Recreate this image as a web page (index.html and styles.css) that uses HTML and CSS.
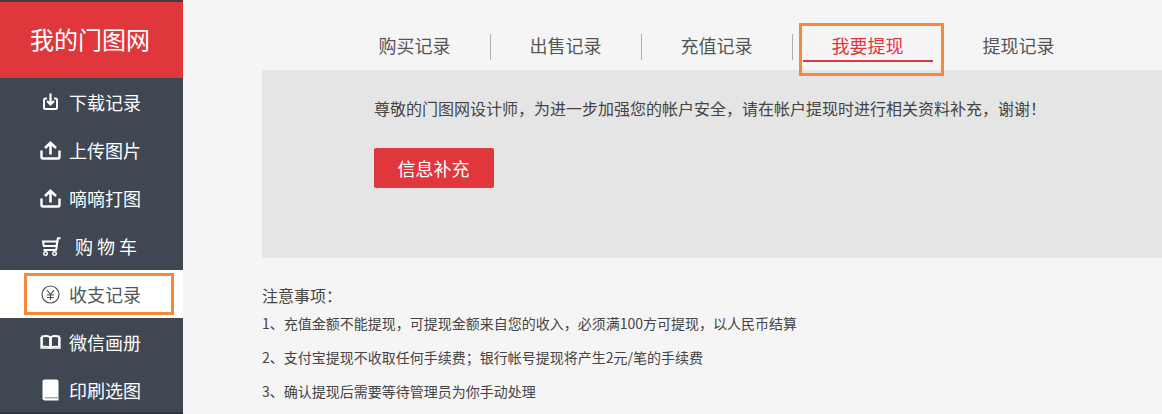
FILE: index.html
```html
<!DOCTYPE html>
<html lang="zh-CN">
<head>
<meta charset="utf-8">
<title>我要提现</title>
<link rel="stylesheet" href="styles.css">
</head>
<body>
<div class="page">
  <aside class="sidebar">
    <div class="logo">我的门图网</div>
    <nav class="menu">
      <a class="item"><svg class="icon" viewBox="0 0 21 19"><path d="M7 5.500H5.500A1.500 1.500 0 0 0 4 7v7.500A1.500 1.500 0 0 0 5.500 16h10a1.500 1.500 0 0 0 1.500-1.500V7a1.500 1.500 0 0 0-1.500-1.500H14" fill="none" stroke="currentColor" stroke-width="2"/><path d="M10.500 .5v10.500M7 8l3.500 3.500L14 8" fill="none" stroke="currentColor" stroke-width="2.200"/></svg><span>下载记录</span></a>
      <a class="item"><svg class="icon" viewBox="0 0 21 19"><path d="M1.500 9.500V16a1.500 1.500 0 0 0 1.500 1.500h15a1.500 1.500 0 0 0 1.500-1.500V9.500" fill="none" stroke="currentColor" stroke-width="2.400"/><path d="M10.500 13.500V1.500M5 7l5.500-5.200L16 7" fill="none" stroke="currentColor" stroke-width="2.600"/></svg><span>上传图片</span></a>
      <a class="item"><svg class="icon" viewBox="0 0 21 19"><path d="M1.500 9.500V16a1.500 1.500 0 0 0 1.500 1.500h15a1.500 1.500 0 0 0 1.500-1.500V9.500" fill="none" stroke="currentColor" stroke-width="2.400"/><path d="M10.500 13.500V1.500M5 7l5.500-5.200L16 7" fill="none" stroke="currentColor" stroke-width="2.600"/></svg><span>嘀嘀打图</span></a>
      <a class="item item-wide"><svg class="icon" viewBox="0 0 21 19"><path d="M20.500 1.200h-2.700L16.300 12.500" fill="none" stroke="currentColor" stroke-width="2"/><path d="M3 4.500h14.300l-.8 4.500H3.800z" fill="none" stroke="currentColor" stroke-width="2"/><path d="M3.500 13h13.500" stroke="currentColor" stroke-width="2"/><circle cx="5.500" cy="16.500" r="1.800" fill="none" stroke="currentColor" stroke-width="1.400"/><circle cx="14.500" cy="16.500" r="1.800" fill="none" stroke="currentColor" stroke-width="1.400"/></svg><span>购 物 车</span></a>
      <a class="item active"><svg class="icon" viewBox="0 0 21 19"><circle cx="10.500" cy="9.500" r="8.500" fill="none" stroke="currentColor" stroke-width="1.200"/><path d="M7 5l3.500 4.500L14 5M7 10h7M7 12.500h7M10.500 9.500V15" fill="none" stroke="currentColor" stroke-width="1.200"/></svg><span>收支记录</span></a>
      <a class="item"><svg class="icon icon-open" viewBox="0 0 21 14"><path d="M2 1.500c3-.7 6-.6 8 .5v10.500c-2-1-5-1.100-8-.7zM19 1.500c-3-.7-6-.6-8 .5v10.500c2-1 5-1.100 8-.7z" fill="none" stroke="currentColor" stroke-width="1.800"/><path d="M1 2v11.200h19V2" fill="none" stroke="currentColor" stroke-width="1.300"/></svg><span>微信画册</span></a>
      <a class="item"><svg class="icon icon-book" viewBox="0 0 21 22"><path d="M4.500 .5h12a2 2 0 0 1 2 2V21.500H5a2.500 2.500 0 0 1-2.500-2.500V2.500a2 2 0 0 1 2-2z" fill="currentColor"/><path d="M4.500 18h14v1.500h-14z" fill="#a9adb3"/></svg><span>印刷选图</span></a>
    </nav>
  </aside>
  <main class="main">
    <ul class="tabs">
      <li class="tab">购买记录</li>
      <li class="tab">出售记录</li>
      <li class="tab">充值记录</li>
      <li class="tab tab-current"><span class="tab-label">我要提现</span></li>
      <li class="tab tab-last">提现记录</li>
    </ul>
    <section class="panel">
      <p class="panel-text">尊敬的门图网设计师，为进一步加强您的帐户安全，请在帐户提现时进行相关资料补充，谢谢！</p>
      <a class="btn">信息补充</a>
    </section>
    <section class="notes">
      <h3 class="notes-title">注意事项：</h3>
      <p class="note">1、充值金额不能提现，可提现金额来自您的收入，必须满100方可提现，以人民币结算</p>
      <p class="note">2、支付宝提现不收取任何手续费；银行帐号提现将产生2元/笔的手续费</p>
      <p class="note">3、确认提现后需要等待管理员为你手动处理</p>
    </section>
  </main>
</div>
</body>
</html>
```
FILE: styles.css
```css
*, *::before, *::after { box-sizing: border-box; margin: 0; padding: 0; }
html, body { height: 414px; overflow: hidden; }
body {
  background: #f5f5f5;
  color: #444;
  font-family: "Noto Sans CJK SC", "Liberation Sans", sans-serif;
}
.page { display: flex; height: 414px; }
.sidebar {
  width: 183px;
  flex: none;
  background: #3f4753;
  border-top: 2px solid #3f3f3f;
  border-bottom: 2px solid #2f3640;
}
.logo {
  height: 76px;
  background: #e0373c;
  color: #fff;
  font-size: 24px;
  line-height: 74px;
  text-align: center;
  padding-right: 3px;
}
.item {
  position: relative;
  height: 48px;
  display: flex;
  align-items: center;
  padding: 0 0 1px 40px;
  color: #fff;
  font-size: 18px;
}
.icon { width: 21px; height: 19px; margin: 2px 8px 0 0; flex: none; }
.icon-open { height: 14px; margin-top: 1px; }
.icon-book { height: 22px; margin-top: 1px; }
.item-wide span { margin-left: 6px; }
.active { background: #fff; color: #555; }
.active::after {
  content: "";
  position: absolute;
  left: 24px; top: 3px;
  width: 150px; height: 42px;
  border: 3px solid #f78a3a;
}
.main { flex: 1; min-width: 0; padding-left: 79px; }
.tabs { display: flex; list-style: none; height: 70px; padding: 34px 0 0 78px; }
.tab {
  position: relative;
  width: 151px;
  height: 26px;
  line-height: 22px;
  border-right: 1px solid #b0b0b0;
  padding-right: 1px;
  text-align: center;
  font-size: 18px;
  color: #555;
  flex: none;
}
.tab-current { border-right: 0; color: #e0373c; padding-right: 2px; }
.tab-last { border-right: 0; padding-right: 2px; }
.tab-current::before {
  content: "";
  position: absolute;
  left: 10px; top: 26px;
  width: 130px; height: 2px;
  background: #e0373c;
}
.tab-current::after {
  content: "";
  position: absolute;
  left: 6px; top: -11px;
  width: 145px; height: 53px;
  border: 3px solid #f78a3a;
}
.panel { height: 188px; background: #e5e5e5; padding: 25px 0 0 112px; }
.panel-text { font-size: 16px; line-height: 26px; color: #444; white-space: nowrap; }
.btn {
  display: block;
  margin-top: 27px;
  width: 120px;
  height: 40px;
  line-height: 40px;
  padding-right: 1px;
  border-radius: 2px;
  background: #e0373c;
  color: #fff;
  font-size: 18px;
  text-align: center;
}
.notes { padding-top: 25px; }
.notes-title { font-size: 16px; font-weight: 400; line-height: 24px; }
.note { font-size: 14px; line-height: 34px; color: #444; }
.notes-title + .note { margin-top: -1px; }
```
